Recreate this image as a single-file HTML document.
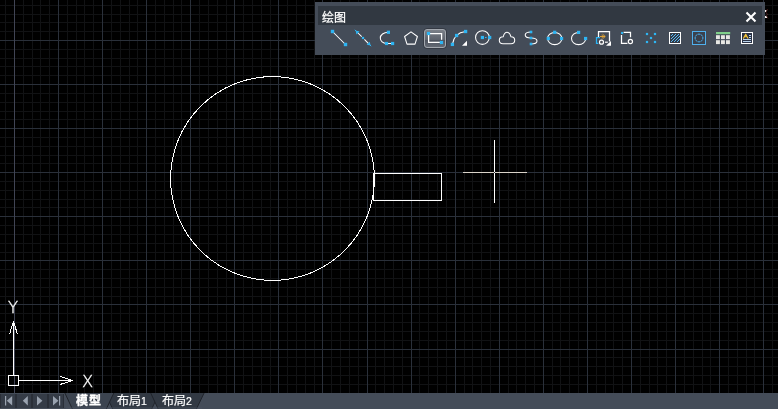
<!DOCTYPE html>
<html lang="zh-CN"><head><meta charset="utf-8"><title>绘图</title>
<style>
html,body{margin:0;padding:0;background:#000;}
body{width:778px;height:409px;position:relative;overflow:hidden;font-family:"Liberation Sans","Noto Sans CJK SC",sans-serif;}
.abs{position:absolute;left:0;top:0;}
#tb{position:absolute;left:315px;top:2px;width:450px;height:53px;background:#444c58;}
#tt{position:absolute;left:3px;top:4px;width:444px;height:19px;background:#313841;}
#tt span{-webkit-text-stroke:0.25px #fff;will-change:transform;position:absolute;left:4px;top:5px;font-size:12px;line-height:14px;color:#fff;white-space:nowrap;}
#btn{position:absolute;left:423px;top:28px;width:22px;height:19px;border:1px solid #353a44;border-radius:4px;}
#btn::before{content:"";position:absolute;left:0;top:0;width:20px;height:17px;border:1px solid #a3a8af;border-radius:3px;background:linear-gradient(#7c8189 0%,#5d636d 56%,#4d535e 59%,#646a74 100%);}
#bar{position:absolute;left:0;top:393px;width:778px;height:16px;background:#444c58;}
#nbs{position:absolute;left:0;top:1px;width:64px;height:14px;background:#2a2f38;}
.nb{position:absolute;top:0;width:14px;height:14px;background:#353c47;}
.tab{-webkit-text-stroke:0.2px #fff;will-change:transform;position:absolute;top:394px;height:16px;font-size:12px;line-height:15px;color:#fff;white-space:nowrap;}
.tab i{font-style:normal;font-size:10.5px;}
.ucs{will-change:transform;position:absolute;color:#fff;font-family:"DejaVu Sans","Liberation Sans",sans-serif;font-weight:200;font-size:16.4px;line-height:16px;-webkit-text-stroke:0.35px #fff;}
</style></head><body>
<svg class="abs" width="778" height="393" viewBox="0 0 778 393" shape-rendering="crispEdges" fill="none">
<path stroke="#111214" d="M5.5 0V393M23.5 0V393M32.5 0V393M40.5 0V393M49.5 0V393M67.5 0V393M76.5 0V393M84.5 0V393M93.5 0V393M111.5 0V393M120.5 0V393M129.5 0V393M137.5 0V393M155.5 0V393M164.5 0V393M173.5 0V393M181.5 0V393M199.5 0V393M208.5 0V393M217.5 0V393M226.5 0V393M243.5 0V393M252.5 0V393M261.5 0V393M270.5 0V393M287.5 0V393M296.5 0V393M305.5 0V393M314.5 0V393M331.5 0V393M340.5 0V393M349.5 0V393M358.5 0V393M375.5 0V393M384.5 0V393M393.5 0V393M402.5 0V393M419.5 0V393M428.5 0V393M437.5 0V393M446.5 0V393M464.5 0V393M472.5 0V393M481.5 0V393M490.5 0V393M508.5 0V393M516.5 0V393M525.5 0V393M534.5 0V393M552.5 0V393M560.5 0V393M569.5 0V393M578.5 0V393M596.5 0V393M605.5 0V393M613.5 0V393M622.5 0V393M640.5 0V393M649.5 0V393M657.5 0V393M666.5 0V393M684.5 0V393M693.5 0V393M702.5 0V393M710.5 0V393M728.5 0V393M737.5 0V393M746.5 0V393M754.5 0V393M772.5 0V393M0 5.5H778M0 14.5H778M0 22.5H778M0 31.5H778M0 49.5H778M0 58.5H778M0 66.5H778M0 75.5H778M0 93.5H778M0 102.5H778M0 111.5H778M0 119.5H778M0 137.5H778M0 146.5H778M0 155.5H778M0 163.5H778M0 181.5H778M0 190.5H778M0 199.5H778M0 207.5H778M0 225.5H778M0 234.5H778M0 243.5H778M0 252.5H778M0 269.5H778M0 278.5H778M0 287.5H778M0 296.5H778M0 313.5H778M0 322.5H778M0 331.5H778M0 340.5H778M0 357.5H778M0 366.5H778M0 375.5H778M0 384.5H778"/>
<path stroke="#2a303a" d="M0 40.5H778M0 84.5H778M0 128.5H778M0 172.5H778M0 216.5H778M0 260.5H778M0 304.5H778M0 349.5H778"/>
<path stroke="#2a303a" d="M14.5 0V393M58.5 0V393M102.5 0V393M146.5 0V393M190.5 0V393M234.5 0V393M278.5 0V393M322.5 0V393M367.5 0V393M411.5 0V393M455.5 0V393M499.5 0V393M543.5 0V393M587.5 0V393M631.5 0V393M675.5 0V393M719.5 0V393M763.5 0V393"/>
<path stroke="#404454" d="M14.5 0V393"/>
</svg>
<svg class="abs" width="778" height="393" viewBox="0 0 778 393" shape-rendering="crispEdges" fill="none" stroke="#fff" stroke-width="1">
<circle cx="272.5" cy="178.5" r="101.9"/>
<rect x="373.5" y="173.5" width="68" height="27"/>
<path d="M494.5 140V203"/>
<path stroke="#d9d2c9" d="M463 172.5H527"/>
<rect x="494" y="172" width="1" height="1" fill="#262d37" stroke="none"/>
<path d="M13.5 321V375M8.5 375.5H18.5V385.5H8.5ZM19 380.5H73"/>
<path d="M13.5 321L9.5 334.5M13.5 321L17.5 334.5M72.5 380.5L60 376.5M72.5 380.5L60 384.5"/>
</svg>
<div class="ucs" style="left:8.3px;top:300px;">Y</div>
<div class="ucs" style="left:82px;top:374px;">X</div>
<div id="tb"><div id="tt"><span>绘图</span></div></div>
<div id="btn"></div>
<svg class="abs" width="778" height="60" viewBox="0 0 778 60">
<defs><clipPath id="hc"><rect x="670.8" y="33.6" width="9" height="8.9"/></clipPath></defs>
<path stroke="#fff" stroke-width="1.05" fill="none" stroke-linecap="round" stroke-linejoin="round" d="M333 32L345 44"/><rect x="330.80" y="29.80" width="3.4" height="3.4" fill="#2eb5f3"/><rect x="343.80" y="42.80" width="3.4" height="3.4" fill="#2eb5f3"/>
<path stroke="#fff" stroke-width="1.05" fill="none" d="M358 33L361.7 36.7M364.4 39.4L368.3 43.3"/><path stroke="#2eb5f3" stroke-width="1" d="M354.8 29.8L357 32M371.2 46.2L369 44"/><path fill="#2eb5f3" d="M355.6 30.6l3.9 0.9-3 3z"/><path fill="#2eb5f3" d="M370.6 45.6l-3.9-0.9 3-3z"/><rect x="361.90" y="36.90" width="2.2" height="2.2" fill="#2eb5f3"/>
<path stroke="#fff" stroke-width="1.05" fill="none" stroke-linecap="round" stroke-linejoin="round" d="M388.4 32.3C383.5 32.3 380.3 35 380.3 38C380.3 41 383 43.5 386.5 43.5L392.6 43.5"/><rect x="386.80" y="30.70" width="3.2" height="3.2" fill="#2eb5f3"/><rect x="384.90" y="41.90" width="3.2" height="3.2" fill="#2eb5f3"/><rect x="391.00" y="41.90" width="3.2" height="3.2" fill="#2eb5f3"/>
<path stroke="#fff" stroke-width="1.05" fill="none" stroke-linecap="round" stroke-linejoin="round" d="M411.0 31.9L417.4 36.5L415.0 44.1L407.0 44.1L404.6 36.5Z"/>
<path stroke="#fff" stroke-width="1.25" fill="none" d="M430 33.6H441.6V39.8M428.6 35V42.4H439.8"/><rect x="426.90" y="31.90" width="3.2" height="3.2" fill="#2eb5f3"/><rect x="439.90" y="40.90" width="3.2" height="3.2" fill="#2eb5f3"/>
<path stroke="#fff" stroke-width="1.05" fill="none" stroke-linecap="round" stroke-linejoin="round" d="M452.4 44.4C453.5 37 458.5 32.3 465.6 31.5"/><rect x="450.75" y="42.75" width="3.3" height="3.3" fill="#2eb5f3"/><rect x="454.95" y="33.85" width="3.3" height="3.3" fill="#2eb5f3"/><rect x="463.95" y="29.85" width="3.3" height="3.3" fill="#2eb5f3"/><path fill="#fff" d="M462 45.8H467V40.7Z"/>
<circle stroke="#fff" stroke-width="1.05" fill="none" stroke-linecap="round" stroke-linejoin="round" cx="482.4" cy="37.5" r="6.85"/><rect x="480.80" y="35.90" width="3.2" height="3.2" fill="#2eb5f3"/><rect x="488.10" y="35.90" width="3.2" height="3.2" fill="#2eb5f3"/><rect x="485" y="37" width="1.6" height="1" fill="#2eb5f3"/>
<path stroke="#fff" stroke-width="1.05" fill="none" stroke-linecap="round" stroke-linejoin="round" d="M503 43.7C500.6 43.7 499.3 42 499.3 40.2C499.3 38.3 500.8 36.9 503.2 36.8C503.9 34.2 505.3 32.3 507.1 32.3C508.9 32.3 510.3 34.2 511 36.8C513.3 36.9 514.7 38.3 514.7 40.2C514.7 42 513.4 43.7 511 43.7Z"/>
<path stroke="#fff" stroke-width="1.05" fill="none" stroke-linecap="round" stroke-linejoin="round" d="M531 32C527.5 32 525.2 33.2 525.2 35C525.2 37 528 38 531 38C534 38 537 39 537 41C537 43 534.5 44 531 44"/><rect x="529.70" y="30.70" width="2.6" height="2.6" fill="#2eb5f3"/><rect x="529.70" y="36.70" width="2.6" height="2.6" fill="#2eb5f3"/><rect x="529.70" y="42.70" width="2.6" height="2.6" fill="#2eb5f3"/>
<ellipse stroke="#fff" stroke-width="1.05" fill="none" stroke-linecap="round" stroke-linejoin="round" cx="554.7" cy="38.5" rx="7.1" ry="6.1"/><rect x="553.10" y="30.70" width="3.2" height="3.2" fill="#2eb5f3"/><rect x="546.70" y="36.90" width="3.2" height="3.2" fill="#2eb5f3"/><rect x="560.00" y="36.90" width="3.2" height="3.2" fill="#2eb5f3"/>
<path stroke="#fff" stroke-width="1.05" fill="none" stroke-linecap="round" stroke-linejoin="round" d="M578.6 32.4A7.1 6.1 0 1 0 585.7 38.5"/><rect x="577.00" y="30.80" width="3.2" height="3.2" fill="#2eb5f3"/><rect x="584.00" y="36.90" width="3.2" height="3.2" fill="#2eb5f3"/>
<path stroke="#fff" stroke-width="1.25" fill="none" d="M598.5 37V31.7H609.5V41.5"/><path stroke="#2eb5f3" stroke-width="1.25" fill="none" d="M600 37.5H596.5V43.4H598.3"/><path stroke="#eaa935" stroke-width="0.9" fill="none" d="M600 36.5H605.2M602.6 34.2L605.2 36.5L602.6 38.8M601.6 35L603.2 36.5L601.6 38"/><circle cx="601.5" cy="42.2" r="2.0" stroke="#fff" stroke-width="1.2" fill="#4a4f58"/><path stroke="#fff" stroke-width="1.2" d="M605 42.2H607.8"/><path fill="#fff" d="M606 45.8H611V41Z"/>
<path stroke="#fff" stroke-width="1.25" fill="none" d="M623.6 32.4H630.5V37.2M621.5 35V43.4H627.4"/><rect x="621.05" y="31.95" width="2.1" height="2.1" fill="#2eb5f3"/><circle cx="630.4" cy="41.5" r="2.1" stroke="#fff" stroke-width="1.2" fill="#4a4f58"/>
<rect x="645.90" y="32.90" width="2.2" height="2.2" fill="#2eb5f3"/><rect x="653.90" y="32.90" width="2.2" height="2.2" fill="#2eb5f3"/><rect x="649.90" y="36.90" width="2.2" height="2.2" fill="#2eb5f3"/><rect x="645.90" y="40.90" width="2.2" height="2.2" fill="#2eb5f3"/><rect x="653.90" y="40.90" width="2.2" height="2.2" fill="#2eb5f3"/>
<rect x="669.5" y="32.5" width="11" height="11" fill="#333a45" stroke="#fff" stroke-width="1" shape-rendering="crispEdges"/><path stroke="#58b9f7" stroke-width="1" shape-rendering="crispEdges" d="M671 35.5h1M672 34.5h1M671 38.5h1M672 37.5h1M673 36.5h1M674 35.5h1M675 34.5h1M671 41.5h1M672 40.5h1M673 39.5h1M674 38.5h1M675 37.5h1M676 36.5h1M677 35.5h1M678 34.5h1M674 41.5h1M675 40.5h1M676 39.5h1M677 38.5h1M678 37.5h1M679 36.5h1M677 41.5h1M678 40.5h1M679 39.5h1"/>
<rect x="692.5" y="31.5" width="13" height="13" fill="#3a414d" stroke="#4fb0ee" stroke-width="1" shape-rendering="crispEdges"/><path fill="none" stroke="#48aeee" stroke-width="1.0" d="M702.69 36.73A3.9 3.9 0 0 1 702.69 39.27M702.51 39.71A3.9 3.9 0 0 1 700.71 41.51M700.27 41.69A3.9 3.9 0 0 1 697.73 41.69M697.29 41.51A3.9 3.9 0 0 1 695.49 39.71M695.31 39.27A3.9 3.9 0 0 1 695.31 36.73M695.49 36.29A3.9 3.9 0 0 1 697.29 34.49M697.73 34.31A3.9 3.9 0 0 1 700.27 34.31M700.71 34.49A3.9 3.9 0 0 1 702.51 36.29"/>
<rect x="716" y="32" width="14.2" height="2.2" fill="#7fd08a"/><rect x="716" y="35.2" width="3.9" height="3.9" fill="#e8e8e5"/><rect x="716" y="40.2" width="3.9" height="3.9" fill="#e8e8e5"/><rect x="721" y="35.2" width="3.9" height="3.9" fill="#e8e8e5"/><rect x="721" y="40.2" width="3.9" height="3.9" fill="#e8e8e5"/><rect x="726" y="35.2" width="3.9" height="3.9" fill="#e8e8e5"/><rect x="726" y="40.2" width="3.9" height="3.9" fill="#e8e8e5"/>
<rect x="741.5" y="32.5" width="11" height="11" fill="#2b3345" stroke="#fff" stroke-width="1" shape-rendering="crispEdges"/><path stroke="#f5c436" stroke-width="1.15" fill="none" stroke-linejoin="round" stroke-linecap="round" d="M743.5 38.2L745.7 34.2L747.9 38.2M744.4 36.7H747"/><path stroke="#b9d3ee" stroke-width="1" d="M749 35.5H751M749 37.5H751M743 39.5H751M743 41.5H751"/>
<path stroke="#fff" stroke-width="2.1" stroke-linecap="butt" d="M746.5 12.5L755.5 21.5M755.5 12.5L746.5 21.5"/>
</svg>
<svg class="abs" width="778" height="409" viewBox="0 0 778 409">
<rect x="765" y="10" width="2" height="2" fill="#f4f0f0"/><rect x="765" y="16" width="2" height="2" fill="#f4f0f0"/>
<path stroke="#4a2020" stroke-width="1" d="M767.5 9L766 12.5L768 15M766 15L768 18.5"/>
</svg>
<div id="bar"><div id="nbs">
<div class="nb" style="left:1px"></div><div class="nb" style="left:17px"></div><div class="nb" style="left:33px"></div><div class="nb" style="left:49px"></div>
</div></div>
<svg class="abs" style="top:393px" width="778" height="16" viewBox="0 393 778 16">
<g fill="#99a2af">
<rect x="5" y="396" width="1.2" height="9.5"/><path d="M6.8 400.7L12.2 396V405.4Z"/>
<path d="M22.8 400.7L27.8 396V405.4Z"/>
<path d="M42.4 400.7L37 396V405.4Z"/>
<path d="M58.4 400.7L53 396V405.4Z"/><rect x="59" y="396" width="1.2" height="9.5"/>
</g>
<!-- tabs -->
<path d="M105.2 393L112.7 409H151.7L159.2 393Z" fill="#323943"/>
<path d="M105.2 393L112.7 409M151.7 409L159.2 393" stroke="#20242b" stroke-width="1" fill="none"/>
<path d="M150.7 393L158.2 409H196.4L204.1 393Z" fill="#323943"/>
<path d="M150.7 393L158.2 409M196.4 409L204.1 393" stroke="#20242b" stroke-width="1" fill="none"/>
<path d="M64.9 393L72.4 409H106.3L113.8 393Z" fill="#3c4450"/>
<path d="M64.9 393L72.4 409M106.3 409L113.8 393" stroke="#20242b" stroke-width="1" fill="none"/>
<rect x="66" y="407" width="136" height="2" fill="#4a5262" opacity="0.35"/>
</svg>
<div class="tab" style="left:76px;top:394px;font-weight:bold;letter-spacing:1px;-webkit-text-stroke:0.35px #fff;">模型</div>
<div class="tab" style="left:117px;">布局<i>1</i></div>
<div class="tab" style="left:162px;">布局<i>2</i></div>
</body></html>
